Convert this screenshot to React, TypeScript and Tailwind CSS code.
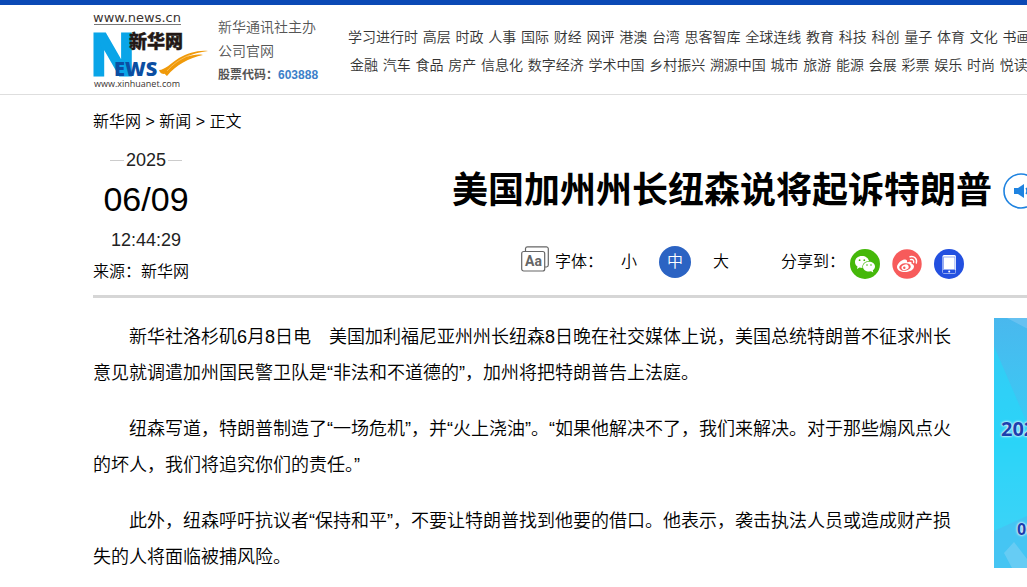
import React from "react";

const NAV_ROWS: string[][] = [
  ["学习进行时", "高层", "时政", "人事", "国际", "财经", "网评", "港澳", "台湾", "思客智库", "全球连线", "教育", "科技", "科创", "量子", "体育", "文化", "书画"],
  ["金融", "汽车", "食品", "房产", "信息化", "数字经济", "学术中国", "乡村振兴", "溯源中国", "城市", "旅游", "能源", "会展", "彩票", "娱乐", "时尚", "悦读"],
];

const PARAGRAPHS: string[] = [
  "新华社洛杉矶6月8日电　美国加利福尼亚州州长纽森8日晚在社交媒体上说，美国总统特朗普不征求州长意见就调遣加州国民警卫队是“非法和不道德的”，加州将把特朗普告上法庭。",
  "纽森写道，特朗普制造了“一场危机”，并“火上浇油”。“如果他解决不了，我们来解决。对于那些煽风点火的坏人，我们将追究你们的责任。”",
  "此外，纽森呼吁抗议者“保持和平”，不要让特朗普找到他要的借口。他表示，袭击执法人员或造成财产损失的人将面临被捕风险。",
];

function Logo() {
  return (
    <svg width="118" height="80" viewBox="0 0 118 80" className="overflow-visible" role="img" aria-label="新华网">
      <text x="0" y="10" fontSize="13" fontWeight="400" fill="#3a3330" className="font-['DejaVu_Sans',sans-serif]">www.news.cn</text>
      <path d="M1 12.500H88" stroke="#777" strokeWidth="1" />
      <text x="-2" y="63" fontSize="60" fontWeight="700" fill="#0aa5e8" stroke="#0aa5e8" strokeWidth="3" className="font-['Liberation_Sans_Narrow','Liberation_Sans',sans-serif]">N</text>
      <text x="36" y="36" fontSize="18" fontWeight="900" fill="#231815" stroke="#231815" strokeWidth=".4" className="font-['Noto_Sans_CJK_SC',sans-serif]">新华网</text>
      <text x="21" y="64" fontSize="20" fontWeight="800" fill="#0b4ea2" className="font-['Open_Sans',sans-serif]">EWS</text>
      <path d="M66 58C72 58 78 51 86 46C95 41 105 38 115 39C107 40 99 42 93 45C99 43 105 42 110 43C96 46 83 53 74 64C72 63 72 61 71 62C69 62 67 61 66 58Z" fill="#f09a0a" />
      <path d="M74 59C80 52 87 47 97 43" stroke="#fbd38a" strokeWidth="0.6" fill="none" />
      <text x="1" y="75" fontSize="9" fontWeight="400" fill="#3a3330" className="font-['Open_Sans',sans-serif]">www.xinhuanet.com</text>
    </svg>
  );
}

function FontIcon() {
  return (
    <svg width="28" height="26" viewBox="0 0 28 26" className="mb-1.5 shrink-0" fill="none" stroke="#666" strokeWidth="1.2" aria-hidden="true">
      <path d="M4.500 5V2.500A2 2 0 0 1 6.500 .8H25.500A2 2 0 0 1 27.300 2.500V19A2 2 0 0 1 25.500 21H24" />
      <rect x=".7" y="5.500" width="23" height="19.500" rx="2" />
      <text x="4" y="20" fontSize="14" fontWeight="700" fill="#666" stroke="none" className="font-['Roboto',sans-serif]">Aa</text>
    </svg>
  );
}

function SpeakerIcon() {
  return (
    <svg width="36" height="36" viewBox="0 0 36 36" fill="none" stroke="#1f83e0" aria-hidden="true">
      <circle cx="18" cy="18" r="17" strokeWidth="1.600" />
      <path d="M11 15H15L21 11V25L15 21H11Z" fill="#1f83e0" stroke="none" />
      <path d="M23 15Q25 18 23 21M25 12.500Q29 18 25 23.500" strokeWidth="1.500" />
    </svg>
  );
}

function WechatIcon() {
  return (
    <svg width="30" height="30" viewBox="0 0 30 30" aria-hidden="true">
      <circle cx="15" cy="15" r="15" fill="#45b80a" />
      <path d="M12 7C7.800 7 5 9.600 5 13C5 15 6 16.500 7.500 17.600L7 20L9.500 18.600C10.400 18.900 11.300 19 12.500 19C11.800 15 15 12 19 12C18.300 9 15.600 7 12 7Z" fill="#fff" />
      <path d="M19 12.800C15.500 12.800 13 15 13 17.700C13 20.500 15.700 22.500 19 22.500L21 22.200L23.300 23.500L22.800 21.300C24.300 20.300 25 19 25 17.600C25 14.800 22.300 12.800 19 12.800Z" fill="#fff" />
      <g fill="#45b80a">
        <circle cx="9.600" cy="11.200" r=".9" />
        <circle cx="14.300" cy="11.200" r=".9" />
        <circle cx="17" cy="16" r=".8" />
        <circle cx="21" cy="16" r=".8" />
      </g>
    </svg>
  );
}

function WeiboIcon() {
  return (
    <svg width="30" height="30" viewBox="0 0 30 30" aria-hidden="true">
      <circle cx="15" cy="15" r="14.700" fill="#f75b5b" />
      <path d="M12.500 10.500C9 11 5 15 5 18C5 21 8.500 23 13 23C18 23 22 20.500 22 17.500C22 16 21 15.200 19.500 14.800C20 13 19 12 15 13.300C15.500 11.500 14.500 10.200 12.500 10.500Z" fill="#fff" />
      <ellipse cx="13" cy="18" rx="5.800" ry="3.700" fill="#f75b5b" transform="rotate(-8 13 18)" />
      <ellipse cx="13" cy="18.200" rx="3.700" ry="2.700" fill="#fff" transform="rotate(-20 13 18)" />
      <circle cx="12.300" cy="18.700" r="1.200" fill="#f75b5b" />
      <path d="M18 7.800C22.500 6.700 25.500 10 24.300 14M18.500 10.600C20.800 10 22.200 11.500 21.600 13.500" fill="none" stroke="#fff" strokeWidth="1.400" strokeLinecap="round" />
    </svg>
  );
}

function PhoneIcon() {
  return (
    <svg width="30" height="30" viewBox="0 0 30 30" aria-hidden="true">
      <circle cx="15" cy="15" r="15" fill="#2350e0" />
      <rect x="8.500" y="6" width="13.500" height="18.500" rx="1.500" fill="#fff" />
      <rect x="9.600" y="8" width="11.300" height="12.600" fill="none" stroke="#7f9af0" strokeWidth=".8" />
      <rect x="9" y="21" width="12.500" height="3" fill="#2350e0" />
      <circle cx="15.200" cy="22.500" r="1" fill="#fff" />
    </svg>
  );
}

function Header() {
  return (
    <header className="flex h-[95px] border-t-[5px] border-b border-t-[#0b49b5] border-b-[#dedede] pl-[93px] text-sm font-[350] text-[#333]">
      <a href="#home" className="mt-[7px] w-[125px] shrink-0"><Logo /></a>
      <div className="mt-2.5 w-[130px] shrink-0 leading-6 text-[#555]">
        <p>新华通讯社主办</p>
        <p>公司官网</p>
        <p className="text-xs leading-6 font-bold">股票代码：<span className="text-[#3c7fc9]">603888</span></p>
      </div>
      <nav className="mt-[18px] shrink-0 whitespace-nowrap text-[17px] leading-7">
        {NAV_ROWS.map((row, i) => (
          <div key={i} className={i === 1 ? "pl-0.5" : ""}>
            {row.map((label) => (
              <React.Fragment key={label}>
                <a href="#channel" className="text-sm leading-7">{label}</a>{" "}
              </React.Fragment>
            ))}
          </div>
        ))}
      </nav>
    </header>
  );
}

function ArticleHead() {
  return (
    <div className="flex border-b-[3px] border-[#d6d6d6] pb-[11px]">
      <div className="w-[106px] shrink-0 pt-3.5 text-center text-[#222]">
        <div className="flex items-center justify-center text-lg leading-6">
          <span className="mr-0.5 h-px w-3.5 bg-[#ccc]" />2025<span className="ml-0.5 h-px w-3.5 bg-[#ccc]" />
        </div>
        <div className="mt-1 text-[34px] leading-[46px] text-black">06/09</div>
        <div className="mt-1.5 text-lg leading-6">12:44:29</div>
        <div className="mt-2 text-left text-base leading-6 text-black">来源：新华网</div>
      </div>
      <div className="w-[900px] shrink-0 pl-[253px] pt-8">
        <div className="flex items-center gap-[11px]">
          <h1 className="whitespace-nowrap text-4xl font-bold leading-[50px] text-black">美国加州州长纽森说将起诉特朗普</h1>
          <button type="button" aria-label="朗读" className="shrink-0"><SpeakerIcon /></button>
        </div>
        <div className="mt-[30px] flex h-8 items-center whitespace-nowrap pl-[69px]">
          <FontIcon />
          <span className="ml-1.5 w-[51px] shrink-0">字体：</span>
          <button type="button" className="ml-[7px] h-8 w-8 shrink-0">小</button>
          <button type="button" className="ml-3.5 h-8 w-8 shrink-0 rounded-full bg-[#2b63c3] text-white">中</button>
          <button type="button" className="ml-3.5 h-8 w-8 shrink-0">大</button>
          <span className="ml-11 w-[69px] shrink-0">分享到：</span>
          <div className="flex shrink-0 gap-3 pt-1">
            <button type="button" aria-label="微信"><WechatIcon /></button>
            <button type="button" aria-label="微博"><WeiboIcon /></button>
            <button type="button" aria-label="手机"><PhoneIcon /></button>
          </div>
        </div>
      </div>
    </div>
  );
}

function Banner() {
  return (
    <aside className="relative ml-[39px] h-[250px] w-[300px] shrink-0 overflow-hidden bg-linear-to-b from-[#49b8ee] via-[#35cdf5] to-[#5fc8f2] font-['Open_Sans',sans-serif] font-bold text-[#1c3fae]">
      <svg className="absolute inset-0" width="300" height="250" aria-hidden="true">
        <path d="M13 0L300 150V0Z" fill="#73c5f2" opacity=".7" />
        <path d="M0 28L33 105V250H0Z" fill="#1fdcfb" opacity=".5" />
        <path d="M0 213L33 198V250H0Z" fill="#4bbcf0" opacity=".6" />
        <path d="M10 235L20 224L40 250H18Z" fill="#7dd0f5" opacity=".6" />
      </svg>
      <div className="relative pl-[7px] pt-[97px] text-xl leading-7 [text-shadow:0_0_3px_white,0_0_2px_white]">2025</div>
      <div className="relative pl-[23px] pt-[74px] text-base leading-6 [text-shadow:0_0_3px_white,0_0_2px_white]">06</div>
    </aside>
  );
}

export default function App() {
  return (
    <div className="min-h-screen overflow-hidden bg-white font-['Liberation_Sans','Noto_Sans_CJK_SC',sans-serif] text-base font-[350] text-black">
      <Header />
      <main className="pl-[93px]">
        <nav className="pt-[15px] leading-6">
          <a href="#home">新华网</a> &gt; <a href="#news">新闻</a> &gt; <span>正文</span>
        </nav>
        <ArticleHead />
        <div className="flex items-start pt-5">
          <article className="w-[862px] shrink-0 space-y-5 pt-px text-lg leading-9">
            {PARAGRAPHS.map((text) => (
              <p key={text} className="indent-9">{text}</p>
            ))}
          </article>
          <Banner />
        </div>
      </main>
    </div>
  );
}
